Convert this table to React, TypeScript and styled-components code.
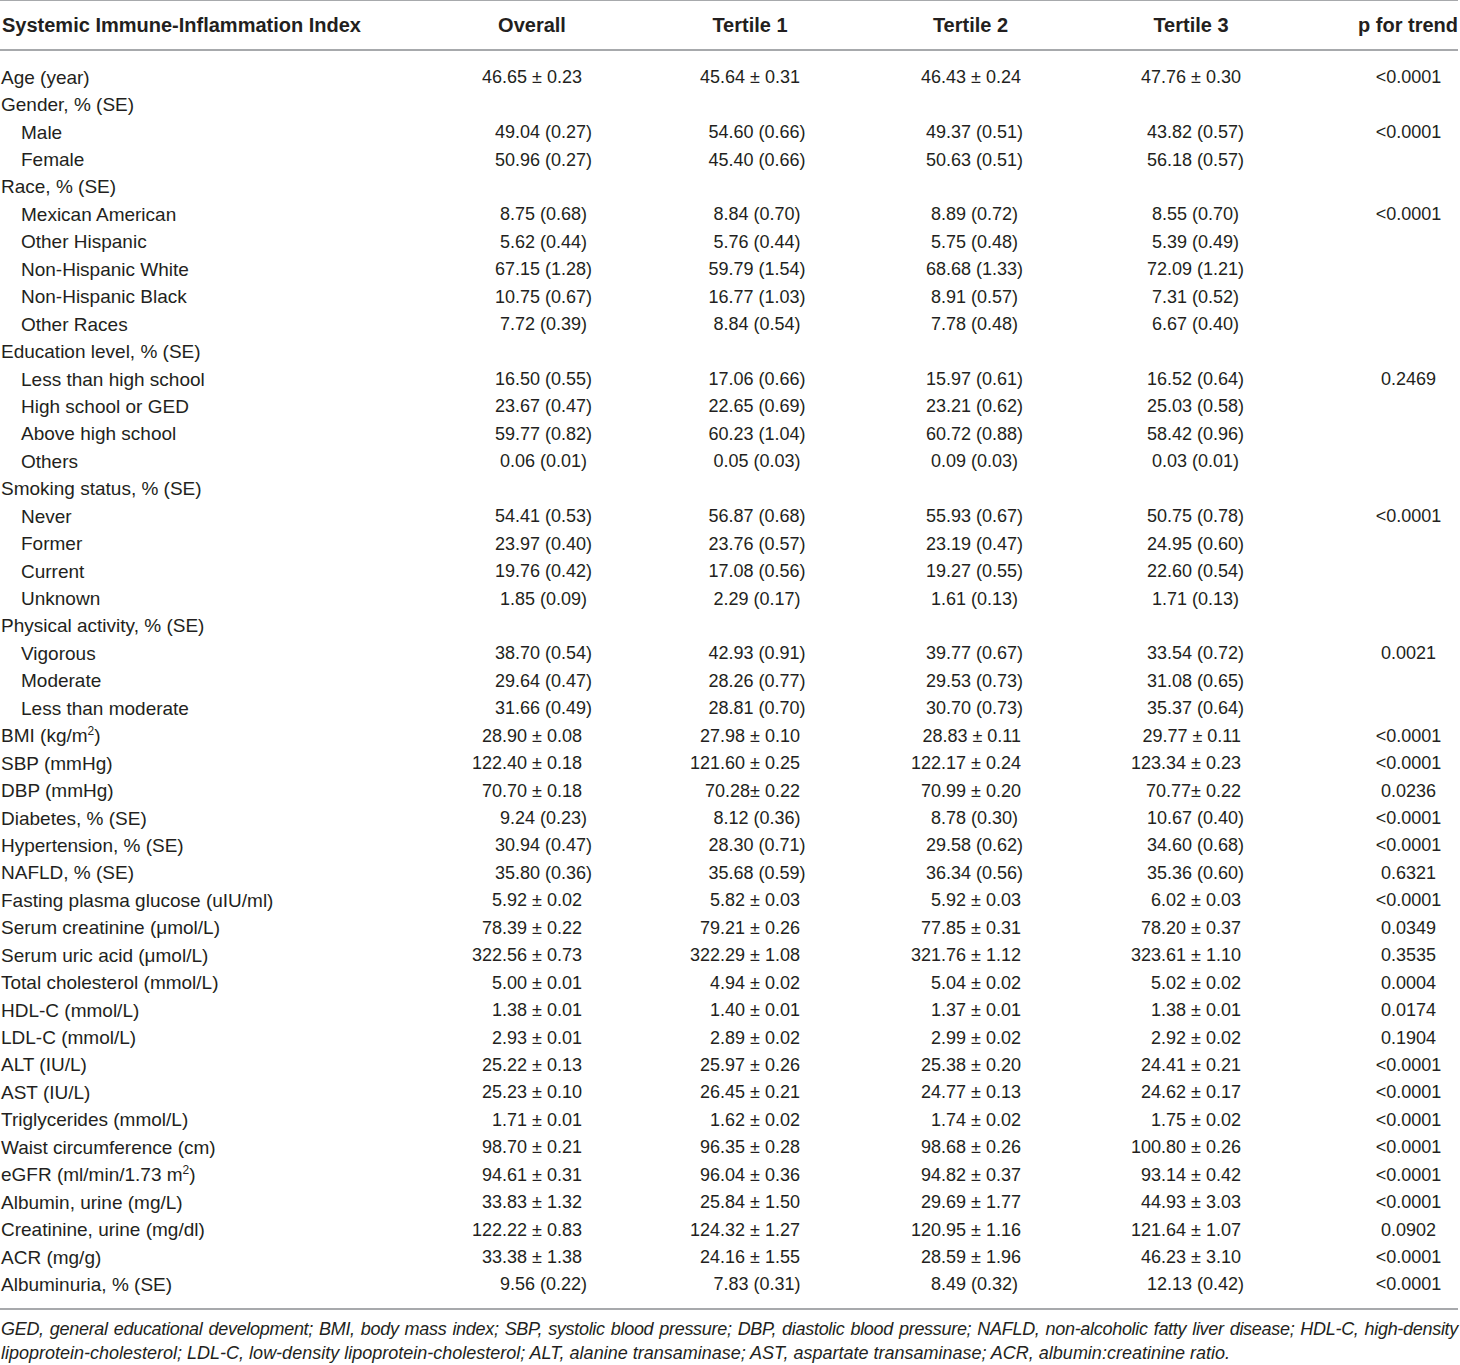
import React from 'react'
import styled, { createGlobalStyle } from 'styled-components'

const GlobalStyle = createGlobalStyle`
  body {
    margin: 0;
    background: #ffffff;
    font-family: "Liberation Sans", Arial, Helvetica, sans-serif;
    color: #231f20;
  }
`

type Kind = 'pm' | 'se'

interface DataRow {
  label: React.ReactNode
  sub?: boolean
  vals?: string[]
  p?: string
  kind?: Kind
}

// right padding of the ± values inside each numeric column
const pmPad = [65, 67, 61, 68]
// header labels sit over the middle of the ± values
const headPad = [23, 14, 8, 9]

const rows: DataRow[] = [
  { label: 'Age (year)', vals: ['46.65 ± 0.23', '45.64 ± 0.31', '46.43 ± 0.24', '47.76 ± 0.30'], p: '<0.0001', kind: 'pm' },
  { label: 'Gender, % (SE)' },
  { label: 'Male', sub: true, vals: ['49.04 (0.27)', '54.60 (0.66)', '49.37 (0.51)', '43.82 (0.57)'], p: '<0.0001', kind: 'se' },
  { label: 'Female', sub: true, vals: ['50.96 (0.27)', '45.40 (0.66)', '50.63 (0.51)', '56.18 (0.57)'], kind: 'se' },
  { label: 'Race, % (SE)' },
  { label: 'Mexican American', sub: true, vals: ['8.75 (0.68)', '8.84 (0.70)', '8.89 (0.72)', '8.55 (0.70)'], p: '<0.0001', kind: 'se' },
  { label: 'Other Hispanic', sub: true, vals: ['5.62 (0.44)', '5.76 (0.44)', '5.75 (0.48)', '5.39 (0.49)'], kind: 'se' },
  { label: 'Non-Hispanic White', sub: true, vals: ['67.15 (1.28)', '59.79 (1.54)', '68.68 (1.33)', '72.09 (1.21)'], kind: 'se' },
  { label: 'Non-Hispanic Black', sub: true, vals: ['10.75 (0.67)', '16.77 (1.03)', '8.91 (0.57)', '7.31 (0.52)'], kind: 'se' },
  { label: 'Other Races', sub: true, vals: ['7.72 (0.39)', '8.84 (0.54)', '7.78 (0.48)', '6.67 (0.40)'], kind: 'se' },
  { label: 'Education level, % (SE)' },
  { label: 'Less than high school', sub: true, vals: ['16.50 (0.55)', '17.06 (0.66)', '15.97 (0.61)', '16.52 (0.64)'], p: '0.2469', kind: 'se' },
  { label: 'High school or GED', sub: true, vals: ['23.67 (0.47)', '22.65 (0.69)', '23.21 (0.62)', '25.03 (0.58)'], kind: 'se' },
  { label: 'Above high school', sub: true, vals: ['59.77 (0.82)', '60.23 (1.04)', '60.72 (0.88)', '58.42 (0.96)'], kind: 'se' },
  { label: 'Others', sub: true, vals: ['0.06 (0.01)', '0.05 (0.03)', '0.09 (0.03)', '0.03 (0.01)'], kind: 'se' },
  { label: 'Smoking status, % (SE)' },
  { label: 'Never', sub: true, vals: ['54.41 (0.53)', '56.87 (0.68)', '55.93 (0.67)', '50.75 (0.78)'], p: '<0.0001', kind: 'se' },
  { label: 'Former', sub: true, vals: ['23.97 (0.40)', '23.76 (0.57)', '23.19 (0.47)', '24.95 (0.60)'], kind: 'se' },
  { label: 'Current', sub: true, vals: ['19.76 (0.42)', '17.08 (0.56)', '19.27 (0.55)', '22.60 (0.54)'], kind: 'se' },
  { label: 'Unknown', sub: true, vals: ['1.85 (0.09)', '2.29 (0.17)', '1.61 (0.13)', '1.71 (0.13)'], kind: 'se' },
  { label: 'Physical activity, % (SE)' },
  { label: 'Vigorous', sub: true, vals: ['38.70 (0.54)', '42.93 (0.91)', '39.77 (0.67)', '33.54 (0.72)'], p: '0.0021', kind: 'se' },
  { label: 'Moderate', sub: true, vals: ['29.64 (0.47)', '28.26 (0.77)', '29.53 (0.73)', '31.08 (0.65)'], kind: 'se' },
  { label: 'Less than moderate', sub: true, vals: ['31.66 (0.49)', '28.81 (0.70)', '30.70 (0.73)', '35.37 (0.64)'], kind: 'se' },
  { label: <>BMI (kg/m<sup>2</sup>)</>, vals: ['28.90 ± 0.08', '27.98 ± 0.10', '28.83 ± 0.11', '29.77 ± 0.11'], p: '<0.0001', kind: 'pm' },
  { label: 'SBP (mmHg)', vals: ['122.40 ± 0.18', '121.60 ± 0.25', '122.17 ± 0.24', '123.34 ± 0.23'], p: '<0.0001', kind: 'pm' },
  { label: 'DBP (mmHg)', vals: ['70.70 ± 0.18', '70.28± 0.22', '70.99 ± 0.20', '70.77± 0.22'], p: '0.0236', kind: 'pm' },
  { label: 'Diabetes, % (SE)', vals: ['9.24 (0.23)', '8.12 (0.36)', '8.78 (0.30)', '10.67 (0.40)'], p: '<0.0001', kind: 'se' },
  { label: 'Hypertension, % (SE)', vals: ['30.94 (0.47)', '28.30 (0.71)', '29.58 (0.62)', '34.60 (0.68)'], p: '<0.0001', kind: 'se' },
  { label: 'NAFLD, % (SE)', vals: ['35.80 (0.36)', '35.68 (0.59)', '36.34 (0.56)', '35.36 (0.60)'], p: '0.6321', kind: 'se' },
  { label: 'Fasting plasma glucose (uIU/ml)', vals: ['5.92 ± 0.02', '5.82 ± 0.03', '5.92 ± 0.03', '6.02 ± 0.03'], p: '<0.0001', kind: 'pm' },
  { label: 'Serum creatinine (μmol/L)', vals: ['78.39 ± 0.22', '79.21 ± 0.26', '77.85 ± 0.31', '78.20 ± 0.37'], p: '0.0349', kind: 'pm' },
  { label: 'Serum uric acid (μmol/L)', vals: ['322.56 ± 0.73', '322.29 ± 1.08', '321.76 ± 1.12', '323.61 ± 1.10'], p: '0.3535', kind: 'pm' },
  { label: 'Total cholesterol (mmol/L)', vals: ['5.00 ± 0.01', '4.94 ± 0.02', '5.04 ± 0.02', '5.02 ± 0.02'], p: '0.0004', kind: 'pm' },
  { label: 'HDL-C (mmol/L)', vals: ['1.38 ± 0.01', '1.40 ± 0.01', '1.37 ± 0.01', '1.38 ± 0.01'], p: '0.0174', kind: 'pm' },
  { label: 'LDL-C (mmol/L)', vals: ['2.93 ± 0.01', '2.89 ± 0.02', '2.99 ± 0.02', '2.92 ± 0.02'], p: '0.1904', kind: 'pm' },
  { label: 'ALT (IU/L)', vals: ['25.22 ± 0.13', '25.97 ± 0.26', '25.38 ± 0.20', '24.41 ± 0.21'], p: '<0.0001', kind: 'pm' },
  { label: 'AST (IU/L)', vals: ['25.23 ± 0.10', '26.45 ± 0.21', '24.77 ± 0.13', '24.62 ± 0.17'], p: '<0.0001', kind: 'pm' },
  { label: 'Triglycerides (mmol/L)', vals: ['1.71 ± 0.01', '1.62 ± 0.02', '1.74 ± 0.02', '1.75 ± 0.02'], p: '<0.0001', kind: 'pm' },
  { label: 'Waist circumference (cm)', vals: ['98.70 ± 0.21', '96.35 ± 0.28', '98.68 ± 0.26', '100.80 ± 0.26'], p: '<0.0001', kind: 'pm' },
  { label: <>eGFR (ml/min/1.73 m<sup>2</sup>)</>, vals: ['94.61 ± 0.31', '96.04 ± 0.36', '94.82 ± 0.37', '93.14 ± 0.42'], p: '<0.0001', kind: 'pm' },
  { label: 'Albumin, urine (mg/L)', vals: ['33.83 ± 1.32', '25.84 ± 1.50', '29.69 ± 1.77', '44.93 ± 3.03'], p: '<0.0001', kind: 'pm' },
  { label: 'Creatinine, urine (mg/dl)', vals: ['122.22 ± 0.83', '124.32 ± 1.27', '120.95 ± 1.16', '121.64 ± 1.07'], p: '0.0902', kind: 'pm' },
  { label: 'ACR (mg/g)', vals: ['33.38 ± 1.38', '24.16 ± 1.55', '28.59 ± 1.96', '46.23 ± 3.10'], p: '<0.0001', kind: 'pm' },
  { label: 'Albuminuria, % (SE)', vals: ['9.56 (0.22)', '7.83 (0.31)', '8.49 (0.32)', '12.13 (0.42)'], p: '<0.0001', kind: 'se' },
]

const Page = styled.div`
  width: 1460px;
  height: 1365px;
  overflow: hidden;
`

const Table = styled.div`
  width: 1458px;
  font-size: 18px;
`

const Grid = styled.div`
  display: grid;
  grid-template-columns: 440px 207px 220px 215px 227px 149px;
  align-items: center;
`

const HeadRow = styled(Grid)`
  height: 48px;
  margin-top: -1px;
  border-top: 2px solid #a7a9ac;
  border-bottom: 2px solid #a7a9ac;
  font-size: 20px;
  font-weight: 700;
`

const HeadCell = styled.div<{ $pr?: number; $align?: string }>`
  text-align: ${(p) => p.$align || 'center'};
  padding-right: ${(p) => p.$pr || 0}px;
  padding-left: ${(p) => (p.$align === 'left' ? 2 : 0)}px;
  white-space: nowrap;
`

const Body = styled.div`
  padding: 13px 0 9px;
  border-bottom: 2px solid #a7a9ac;
`

const Row = styled(Grid)`
  height: 27.45px;
`

const Label = styled.div<{ $sub?: boolean }>`
  padding-left: ${(p) => (p.$sub ? 21 : 1)}px;
  font-size: 19px;
  white-space: nowrap;

  sup {
    font-size: 12px;
    line-height: 0;
    vertical-align: 7px;
  }
`

const Value = styled.div<{ $kind: Kind; $pr: number }>`
  white-space: nowrap;
  text-align: ${(p) => (p.$kind === 'pm' ? 'right' : 'center')};
  padding-right: ${(p) => (p.$kind === 'pm' ? p.$pr : 0)}px;
`

const PValue = styled.div`
  text-align: center;
  padding-left: 50px;
  white-space: nowrap;
`

const Note = styled.div`
  padding: 7px 0 0 1px;
  font-size: 18px;
  font-style: italic;
  line-height: 24px;
`

const NoteLine = styled.div<{ $full?: boolean }>`
  white-space: nowrap;
  letter-spacing: ${(p) => (p.$full ? '-0.3px' : '0')};
  text-align: ${(p) => (p.$full ? 'justify' : 'left')};
  text-align-last: ${(p) => (p.$full ? 'justify' : 'left')};
`

export default function App() {
  return (
    <Page>
      <GlobalStyle />
      <Table>
        <HeadRow>
          <HeadCell $align="left">Systemic Immune-Inflammation Index</HeadCell>
          {['Overall', 'Tertile 1', 'Tertile 2', 'Tertile 3'].map((h, i) => (
            <HeadCell key={h} $pr={headPad[i]}>{h}</HeadCell>
          ))}
          <HeadCell $align="right">p for trend</HeadCell>
        </HeadRow>
        <Body>
          {rows.map((r, i) => (
            <Row key={i}>
              <Label $sub={r.sub}>{r.label}</Label>
              {[0, 1, 2, 3].map((c) => (
                <Value key={c} $kind={r.kind || 'se'} $pr={pmPad[c]}>
                  {r.vals ? r.vals[c] : ''}
                </Value>
              ))}
              <PValue>{r.p || ''}</PValue>
            </Row>
          ))}
        </Body>
        <Note>
          <NoteLine $full>
            GED, general educational development; BMI, body mass index; SBP, systolic blood pressure; DBP, diastolic blood pressure; NAFLD, non-alcoholic fatty liver disease; HDL-C, high-density
          </NoteLine>
          <NoteLine>
            lipoprotein-cholesterol; LDL-C, low-density lipoprotein-cholesterol; ALT, alanine transaminase; AST, aspartate transaminase; ACR, albumin:creatinine ratio.
          </NoteLine>
        </Note>
      </Table>
    </Page>
  )
}
